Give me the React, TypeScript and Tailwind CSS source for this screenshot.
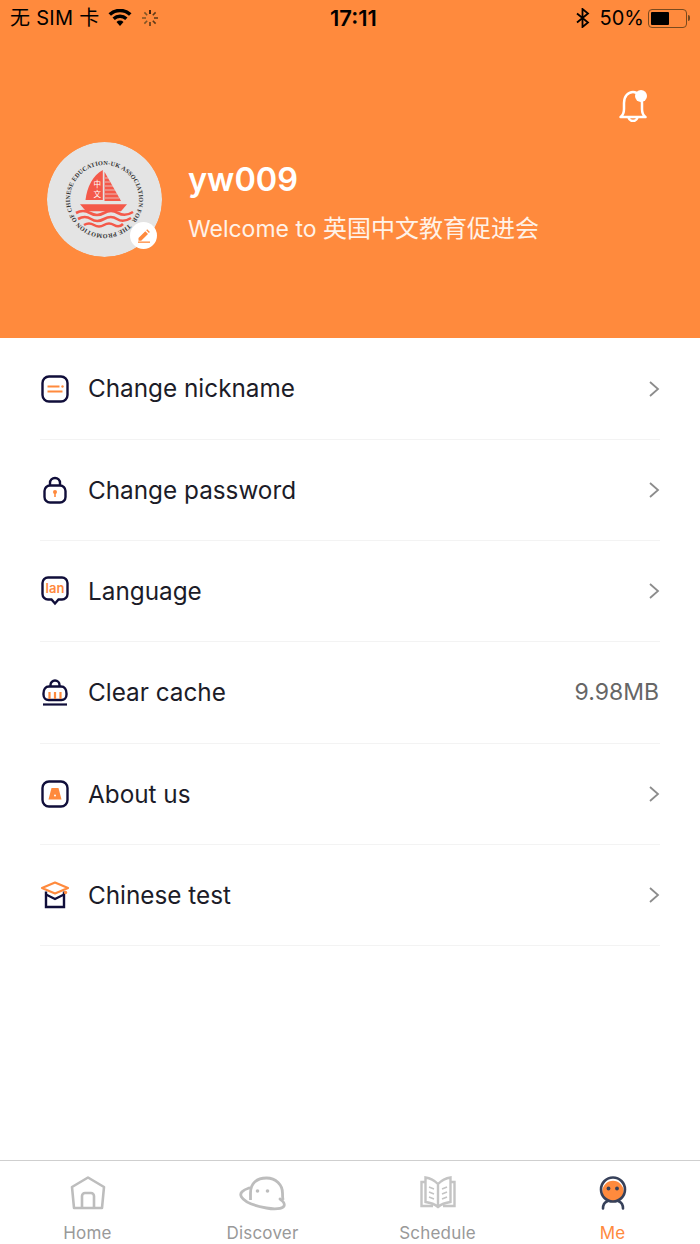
import React from "react";

const FONT = "font-['Inter','Noto_Sans_CJK_SC',sans-serif]";
const NAVY = "#100e3a";
const ORANGE = "#ff8a3d";

function IconNickname() {
  return (
    <svg width="28" height="28" viewBox="0 0 28 28" fill="none">
      <rect x="1.5" y="1.5" width="25" height="25" rx="6.5" stroke={NAVY} strokeWidth="2.4" />
      <path d="M6.5 11.5h12M6.5 16.5h15" stroke={ORANGE} strokeWidth="2.2" />
      <circle cx="21.5" cy="11.5" r="1.2" fill={ORANGE} />
    </svg>
  );
}

function IconLock() {
  return (
    <svg width="28" height="28" viewBox="0 0 28 28" fill="none">
      <path d="M9 10V7a5 5 0 0 1 10 0v3" stroke={NAVY} strokeWidth="2.4" />
      <rect x="3.5" y="9.5" width="21" height="17" rx="5.5" stroke={NAVY} strokeWidth="2.4" />
      <circle cx="14" cy="16" r="2" fill={ORANGE} />
      <path d="M14 16v5" stroke={ORANGE} strokeWidth="1.6" />
    </svg>
  );
}

function IconLanguage() {
  return (
    <svg width="28" height="30" viewBox="0 0 28 30" fill="none">
      <path
        d="M7 1.5h14a5.5 5.5 0 0 1 5.5 5.5v11a5.5 5.5 0 0 1-5.5 5.5h-3.5L14 27.5l-3.5-4H7A5.5 5.5 0 0 1 1.5 18V7A5.5 5.500 0 0 1 7 1.5z"
        stroke={NAVY}
        strokeWidth="2.4"
      />
      <text x="14" y="17" textAnchor="middle" fontSize="13" fontWeight="600" fill={ORANGE} fontFamily="Inter, sans-serif">
        lan
      </text>
    </svg>
  );
}

function IconCache() {
  return (
    <svg width="28" height="30" viewBox="0 0 28 30" fill="none">
      <path d="M9.5 9V7a4.5 4.5 0 0 1 9 0v2" stroke={NAVY} strokeWidth="2.4" />
      <path d="M8 8.5h12c3.5 0 5.500 3 5.500 7v1c0 3-2 5.500-5 5.500h-13c-3 0-5-2.500-5-5.500v-1c0-4 2-7 5.500-7z" stroke={NAVY} strokeWidth="2.4" />
      <path d="M8.500 14v7M14 14v7M19.500 14v7" stroke={ORANGE} strokeWidth="2.200" />
      <path d="M2 26.500h24" stroke={NAVY} strokeWidth="2.200" />
    </svg>
  );
}

function IconAbout() {
  return (
    <svg width="28" height="28" viewBox="0 0 28 28" fill="none">
      <rect x="1.5" y="1.500" width="25" height="25" rx="6.500" stroke={NAVY} strokeWidth="2.400" />
      <path d="M10.500 8h7l3 11.500h-13z" fill={ORANGE} />
      <circle cx="14" cy="15.500" r="1" fill="#fff" />
    </svg>
  );
}

function IconTest() {
  return (
    <svg width="30" height="28" viewBox="0 0 30 28" fill="none">
      <path d="M6 10.500v15.500h18v-15.500" stroke={NAVY} strokeWidth="2.400" />
      <path d="M6 13.500l9 4.500 9-4.500" stroke={NAVY} strokeWidth="2.200" />
      <path d="M2 7l13-5.500L28 7l-13 5.500z" stroke={ORANGE} strokeWidth="2.200" strokeLinejoin="round" fill="#fff" />
      <circle cx="25.500" cy="11.500" r="1.700" fill={ORANGE} />
    </svg>
  );
}

function Logo() {
  return (
    <svg width="115" height="115" viewBox="0 0 115 115" className="rounded-full">
      <circle cx="57.500" cy="57.500" r="57.500" fill="#e4e4e4" />
      <defs>
        <path id="ring" d="M81.900 81.900A34.500 34.500 0 1 1 33.100 33.100A34.500 34.500 0 0 1 81.900 81.900" />
      </defs>
      <text fontSize="6.200" fontWeight="700" fill="#333" fontFamily="'Liberation Serif', serif" letterSpacing="0.180">
        <textPath href="#ring" startOffset="0">
          THE PROMOTION OF CHINESE EDUCATION-UK ASSOCIATION FOR
        </textPath>
      </text>
      <path d="M55.800 28C46 33 40 45 38.500 58h17.300z" fill="#f4594a" />
      <path d="M57.500 29.700L74 59H57.500z" fill="#f4594a" />
      <path d="M58 36h3M58 40h5M58 44h8M58 48h10M58 52h12M58 56h14" stroke="#e4e4e4" strokeWidth="0.700" />
      <text x="50.300" y="45" fontSize="7.500" textAnchor="middle" fill="#fff" fontFamily="'Noto Sans CJK SC', sans-serif">中</text>
      <text x="50.300" y="55" fontSize="7.500" textAnchor="middle" fill="#fff" fontFamily="'Noto Sans CJK SC', sans-serif">文</text>
      <path d="M33 62.300h47l-6 7H39z" fill="#f4594a" />
      <path
        d="M29 71q7-4 14 0t14 0 14 0 15-1M31 77q7-4 13 0t13 0 13 0 14-1M37 83q5-3 10 0t10 0 10 0 9-1"
        fill="none"
        stroke="#f4594a"
        strokeWidth="2.600"
      />
    </svg>
  );
}

function IconHome() {
  return (
    <svg width="36" height="36" viewBox="0 0 36 36" fill="none" stroke="#bdbdbd" strokeWidth="2.600" strokeLinejoin="round">
      <path d="M18 2.500L34 12l-2 21H4L2 12z" />
      <path d="M12 33V21a3 3 0 0 1 3-3h6a3 3 0 0 1 3 3v12" />
    </svg>
  );
}

function IconDiscover() {
  return (
    <svg width="48" height="36" viewBox="0 0 48 36" fill="none" stroke="#bdbdbd" strokeWidth="2.800">
      <path d="M11.500 25V18C11.500 8 18 3 27.500 3S43.500 10 43.500 18c0 3 0 5 .5 7" />
      <path d="M10 13C4 15 0 18 2.500 22c3 5 14 9 25 11 8 1.500 16 1 17.500-2 1-2-1-5-4-7" strokeLinecap="round" />
      <circle cx="18.500" cy="16" r="1.800" fill="#bdbdbd" stroke="none" />
      <circle cx="28.500" cy="16" r="1.800" fill="#bdbdbd" stroke="none" />
    </svg>
  );
}

function IconSchedule() {
  return (
    <svg width="36" height="34" viewBox="0 0 36 34" fill="none" stroke="#c4c4c4" strokeWidth="2.400">
      <path d="M18 8C14 4 9 2 5.500 1.500V26c4 .5 9 2 12.500 5 3.500-3 8.500-4.500 12.500-5V1.500C27 2 22 4 18 8zM18 8v23" />
      <path d="M5.500 6H1.500v24H13M30.500 6h4v24H23" />
      <path d="M9 11l5 2M9 16l5 2M9 21l5 2M27 11l-5 2M27 16l-5 2M27 21l-5 2" strokeWidth="1.600" />
    </svg>
  );
}

function IconMe() {
  return (
    <svg width="28" height="34" viewBox="0 0 28 34" fill="none">
      <circle cx="14" cy="15.500" r="10.700" fill={ORANGE} />
      <circle cx="14" cy="13.500" r="12" stroke="#37415a" strokeWidth="2.600" />
      <circle cx="9.500" cy="12.500" r="1.900" fill="#37415a" />
      <circle cx="18" cy="12.500" r="1.900" fill="#37415a" />
      <path d="M4 32.500c0-4 1.500-6 4-7M24 32.500c0-4-1.500-6-4-7" stroke="#37415a" strokeWidth="2.600" strokeLinecap="round" />
    </svg>
  );
}

const rows = [
  { icon: <IconNickname />, label: "Change nickname" },
  { icon: <IconLock />, label: "Change password" },
  { icon: <IconLanguage />, label: "Language" },
  { icon: <IconCache />, label: "Clear cache", value: "9.98MB" },
  { icon: <IconAbout />, label: "About us" },
  { icon: <IconTest />, label: "Chinese test" },
];

const tabs = [
  { icon: <IconHome />, label: "Home" },
  { icon: <IconDiscover />, label: "Discover" },
  { icon: <IconSchedule />, label: "Schedule" },
  { icon: <IconMe />, label: "Me", active: true },
];

export default function App() {
  return (
    <div className={`flex h-[1244px] w-[700px] flex-col overflow-hidden bg-white ${FONT}`}>
      {/* Orange header */}
      <header className="h-[338px] shrink-0 bg-[#ff8a3d]">
        <div className="flex h-[36px] items-center pl-[10px] pr-[10px] text-[20px] text-black">
          <div className="flex w-[320px] items-center">
            <span className="w-[88px] whitespace-nowrap tracking-[0.3px]">无 SIM 卡</span>
            <svg width="24" height="18" viewBox="0 0 24 18" className="ml-[10px]">
              <path d="M12 17l-3.500-4a5 5 0 0 1 7 0zM6.800 11L4.500 8.500a11 11 0 0 1 15 0L17.200 11a8 8 0 0 0-10.400 0zM3 6.800L.5 4.200a17 17 0 0 1 23 0L21 6.800a13.500 13.500 0 0 0-18 0z" fill="#000" />
            </svg>
            <svg width="18" height="18" viewBox="0 0 18 18" stroke="#000" strokeWidth="1.600" className="ml-[9px]">
              <path d="M9 1v4" opacity=".9" />
              <path d="M14.600 3.400l-2.800 2.800M17 9h-4M14.600 14.600l-2.800-2.800M9 17v-4" stroke="#5e3a18" />
              <path d="M3.400 14.600l2.800-2.800M1 9h4M3.400 3.400l2.800 2.800" stroke="#7d5426" />
            </svg>
          </div>
          <span className="text-[22px] font-semibold">17:11</span>
          <div className="flex flex-1 items-center justify-end">
            <svg width="14" height="20" viewBox="0 0 14 20" fill="none" stroke="#000" strokeWidth="1.800">
              <path d="M1 5.500l11 9-5.500 4.500V1L12 5.500l-11 9" />
            </svg>
            <span className="ml-[10px]">50%</span>
            <div className="ml-[4px] flex items-center gap-[1px]">
              <div className="h-[19px] w-[39px] rounded-[4px] border border-[#7a4a1e] p-[2px]">
                <div className="h-full w-[18px] rounded-[1px] bg-black" />
              </div>
              <div className="h-[6px] w-[2px] rounded-r-sm bg-[#7a4a1e]" />
            </div>
          </div>
        </div>

        <div className="flex justify-end pr-[53px] pt-[54px]">
          <div className="relative">
            <svg width="28" height="32" viewBox="0 0 28 32" fill="none" stroke="#fff" strokeWidth="2.500" strokeLinejoin="round">
              <path d="M1.500 27c3-2 3.500-4 3.500-8v-6C5 6.500 9 2 14 2s9 4.500 9 11v6c0 4 .5 6 3.500 8z" />
              <path d="M9.500 27.500c.5 2 2.500 3.500 4.500 3.500s4-1.500 4.500-3.500" />
            </svg>
            <div className="absolute right-0 top-0 h-[12px] w-[12px] rounded-full bg-white" />
          </div>
        </div>

        <div className="mt-[20px] flex items-start pl-[47px]">
          <div className="relative shrink-0">
            <Logo />
            <div className="absolute bottom-[8px] right-[5px] flex h-[27px] w-[27px] items-center justify-center rounded-full bg-white">
              <svg width="14" height="14" viewBox="0 0 14 14" fill={ORANGE}>
                <path d="M1.500 9l6.800-6.800 2.700 2.700L4.200 11.700H1.500zM9.200 1.300l1-1 2.700 2.700-1 1z" />
                <path d="M1 12.500h12v1.300H1z" />
              </svg>
            </div>
          </div>
          <div className="ml-[26px] mt-[17px] flex flex-col text-white">
            <span className="text-[32.500px] font-semibold leading-[42px]">yw009</span>
            <span className="mt-[13px] whitespace-nowrap text-[23px] leading-[30px] text-[#fff2e8]">
              Welcome to <span className="text-[24px]">英国中文教育促进会</span>
            </span>
          </div>
        </div>
      </header>

      {/* Settings list */}
      <main className="flex-1 px-[40px] pt-[0.5px]">
        {rows.map((row) => (
          <div key={row.label} className="flex h-[101.33px] items-center border-b border-[#f3f3f3]">
            <div className="flex w-[30px] justify-center">{row.icon}</div>
            <span className="ml-[18px] flex-1 text-[24.300px] text-[#1c1c28]">{row.label}</span>
            {row.value ? (
              <span className="pr-[1px] text-[23px] text-[#666]">{row.value}</span>
            ) : (
              <svg width="12" height="18" viewBox="0 0 12 18" fill="none" stroke="#8c8c8c" strokeWidth="1.800">
                <path d="M2 2l8 7-8 7" />
              </svg>
            )}
          </div>
        ))}
      </main>

      {/* Tab bar */}
      <nav className="grid h-[84px] shrink-0 grid-cols-4 border-t border-[#cfcfcf] bg-white">
        {tabs.map((tab) => (
          <div key={tab.label} className="flex flex-col items-center pt-[14px]">
            <div className="flex h-[36px] items-center">{tab.icon}</div>
            <span className={`mt-[11px] text-[17px] leading-[22px] tracking-[0.2px] ${tab.active ? "text-[#ff8a3d]" : "text-[#999]"}`}>
              {tab.label}
            </span>
          </div>
        ))}
      </nav>
    </div>
  );
}
